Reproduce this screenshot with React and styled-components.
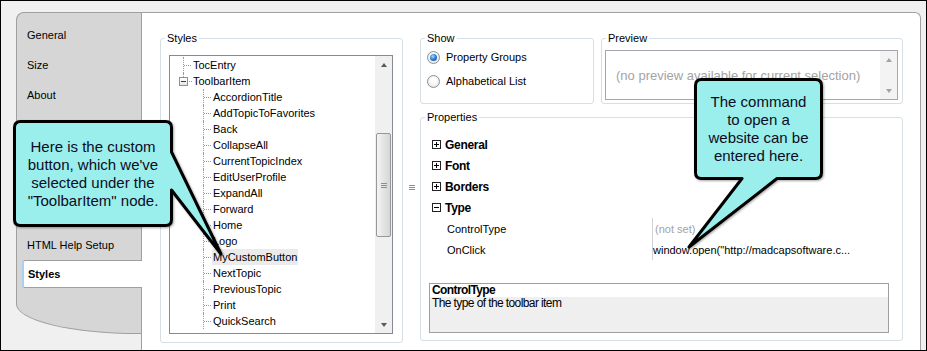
import styled, { createGlobalStyle } from "styled-components";

const GlobalStyle = createGlobalStyle`
  html, body {
    margin: 0;
    padding: 0;
  }
  body {
    background: #f0f0f0;
    font-family: "Liberation Sans", Arial, sans-serif;
    font-size: 11px;
    color: #000;
  }
`;

const treeItems = [
  { label: "TocEntry", level: 1 },
  { label: "ToolbarItem", level: 1, expander: true },
  { label: "AccordionTitle", level: 2 },
  { label: "AddTopicToFavorites", level: 2 },
  { label: "Back", level: 2 },
  { label: "CollapseAll", level: 2 },
  { label: "CurrentTopicIndex", level: 2 },
  { label: "EditUserProfile", level: 2 },
  { label: "ExpandAll", level: 2 },
  { label: "Forward", level: 2 },
  { label: "Home", level: 2 },
  { label: "Logo", level: 2 },
  { label: "MyCustomButton", level: 2, selected: true },
  { label: "NextTopic", level: 2 },
  { label: "PreviousTopic", level: 2 },
  { label: "Print", level: 2 },
  { label: "QuickSearch", level: 2 },
];

const propertyGroups = ["General", "Font", "Borders"];

export default function App() {
  return (
    <>
      <GlobalStyle />
      <Window>
        <TabColumn>
          <Tab>General</Tab>
          <Tab>Size</Tab>
          <Tab>About</Tab>
          <TabGap />
          <Tab>HTML Help Setup</Tab>
          <Tab $active>Styles</Tab>
        </TabColumn>

        <Panel>
          <StylesGroup>
            <Legend>Styles</Legend>
            <TreeBox>
              <TreeList>
                {treeItems.map((item) => (
                  <TreeRow key={item.label}>
                    {item.expander ? (
                      <ExpanderCell>
                        <ExpandBox />
                        <Dash />
                      </ExpanderCell>
                    ) : (
                      <Connector $level={item.level} />
                    )}
                    <TreeLabel $selected={item.selected}>{item.label}</TreeLabel>
                  </TreeRow>
                ))}
              </TreeList>
              <ScrollBar>
                <ScrollButton>
                  <Arrow />
                </ScrollButton>
                <Thumb $offset={60} $size={104}>
                  <Grip />
                </Thumb>
                <ScrollFill />
                <ScrollButton>
                  <Arrow $down />
                </ScrollButton>
              </ScrollBar>
            </TreeBox>
          </StylesGroup>

          <Splitter>
            <Grip />
          </Splitter>

          <RightColumn>
            <TopRow>
              <ShowGroup>
                <Legend>Show</Legend>
                <RadioRow>
                  <Radio $checked />
                  Property Groups
                </RadioRow>
                <RadioRow>
                  <Radio />
                  Alphabetical List
                </RadioRow>
              </ShowGroup>
              <PreviewGroup>
                <Legend>Preview</Legend>
                <PreviewBox>
                  <PreviewText>(no preview available for current selection)</PreviewText>
                  <ScrollBar $light>
                    <ScrollButton>
                      <Arrow $disabled />
                    </ScrollButton>
                    <ScrollFill />
                    <ScrollButton>
                      <Arrow $down $disabled />
                    </ScrollButton>
                  </ScrollBar>
                </PreviewBox>
              </PreviewGroup>
            </TopRow>

            <PropertiesGroup>
              <Legend>Properties</Legend>
              <PropRows>
                {propertyGroups.map((name) => (
                  <GroupRow key={name}>
                    <PlusBox />
                    {name}
                  </GroupRow>
                ))}
                <GroupRow>
                  <PlusBox $open />
                  Type
                </GroupRow>
                <PropRow>
                  <PropName>ControlType</PropName>
                  <PropValue $muted>(not set)</PropValue>
                </PropRow>
                <PropRow>
                  <PropName>OnClick</PropName>
                  <PropValue>window.open("http://madcapsoftware.c...</PropValue>
                </PropRow>
              </PropRows>
              <DescBox>
                <DescTitle>ControlType</DescTitle>
                <DescBody>The type of the toolbar item</DescBody>
              </DescBox>
            </PropertiesGroup>
          </RightColumn>
        </Panel>

        <Callout $x={13} $y={120} $w={160} $h={107}>
          <CalloutShape width="160" height="107">
            <path d="M7.5 1.5 H152.5 Q158.5 1.5 158.5 7.5 V32 L208 134 L158.5 70 V99.5 Q158.5 105.5 152.5 105.5 H7.5 Q1.5 105.5 1.5 99.5 V7.5 Q1.5 1.5 7.5 1.5 Z" />
          </CalloutShape>
          <CalloutText>
            Here is the custom
            <br />
            button, which we've
            <br />
            selected under the
            <br />
            "ToolbarItem" node.
          </CalloutText>
        </Callout>

        <Callout $x={694} $y={78} $w={129} $h={102}>
          <CalloutShape width="129" height="102">
            <path d="M7.5 1.5 H121.5 Q127.5 1.5 127.5 7.5 V94.5 Q127.5 100.5 121.5 100.5 H83 L-5 169 L48 100.5 H7.5 Q1.5 100.5 1.5 94.5 V7.5 Q1.5 1.5 7.5 1.5 Z" />
          </CalloutShape>
          <CalloutText>
            The command
            <br />
            to open a
            <br />
            website can be
            <br />
            entered here.
          </CalloutText>
        </Callout>
      </Window>
    </>
  );
}

const Window = styled.div`
  position: relative;
  width: 927px;
  height: 351px;
  box-sizing: border-box;
  border: 1px solid #000;
  background: #f0f0f0;
  overflow: hidden;
  display: flex;
  align-items: flex-start;
  padding: 11px 5px 0 15px;
`;

const TabColumn = styled.div`
  width: 125px;
  height: 322px;
  flex: none;
  box-sizing: border-box;
  display: flex;
  flex-direction: column;
  padding-top: 7px;
  background: #d6d6d6;
  border-top: 1px solid #a0a0a0;
  border-left: 1px solid #a0a0a0;
  border-bottom: 1px solid #a0a0a0;
  border-top-left-radius: 8px;
  border-bottom-left-radius: 122px 30px;
`;

const Tab = styled.div`
  position: relative;
  z-index: 1;
  display: flex;
  align-items: center;
  box-sizing: border-box;
  height: ${(p) => (p.$active ? 28 : 30)}px;
  padding-left: ${(p) => (p.$active ? 4 : 10)}px;
  margin-left: ${(p) => (p.$active ? 5 : 0)}px;
  margin-right: ${(p) => (p.$active ? -1 : 0)}px;
  font-weight: ${(p) => (p.$active ? 700 : 400)};
  ${(p) =>
    p.$active &&
    `
    background: #fff;
    border-top: 1px solid #a0a0a0;
    border-bottom: 1px solid #a0a0a0;
    border-left: 2px solid #a9d1f3;
    border-radius: 3px 0 0 3px;
  `}
`;

const TabGap = styled.div`
  height: 120px;
`;

const Panel = styled.div`
  flex: 1;
  align-self: stretch;
  display: flex;
  align-items: flex-start;
  box-sizing: border-box;
  padding: 19px 17px 0 18px;
  background: #fff;
  border: 1px solid #a0a0a0;
  border-bottom: none;
  border-top-right-radius: 6px;
`;

const Group = styled.fieldset`
  margin: 0;
  min-width: 0;
  box-sizing: border-box;
  padding: 0 6px;
  border: 1px solid #d5dfe5;
  border-radius: 3px;
`;

const Legend = styled.legend`
  padding: 0 2px;
  margin-left: -2px;
  font-size: 11px;
  line-height: 13px;
`;

const StylesGroup = styled(Group)`
  width: 243px;
  height: 311px;
  flex: none;
  display: flex;
  padding-top: 10px;
  padding-bottom: 8px;
`;

const TreeBox = styled.div`
  flex: 1;
  display: flex;
  margin: 0 3px 0 2px;
  border: 1px solid #868a91;
  background: #fff;
  overflow: hidden;
`;

const TreeList = styled.div`
  flex: 1;
  padding-top: 1px;
  overflow: hidden;
`;

const TreeRow = styled.div`
  display: flex;
  align-items: center;
  height: 16px;
  white-space: nowrap;
`;

const Connector = styled.span`
  align-self: stretch;
  flex: none;
  width: 8px;
  margin-left: ${(p) => (p.$level === 1 ? 13 : 33)}px;
  border-left: 1px dotted #9a9a9a;
  background: repeating-linear-gradient(to right, #9a9a9a 0 1px, transparent 1px 2px) left center / 100% 1px no-repeat;
`;

const ExpanderCell = styled.span`
  display: flex;
  align-items: center;
  flex: none;
  margin-left: 9px;
`;

const ExpandBox = styled.span`
  position: relative;
  width: 9px;
  height: 9px;
  box-sizing: border-box;
  border: 1px solid #919191;
  background: linear-gradient(#3c3c3c, #3c3c3c) center / 5px 1px no-repeat,
    linear-gradient(#fff, #e6e6e6);

  &::before {
    content: "";
    position: absolute;
    left: 3px;
    top: -5px;
    height: 4px;
    border-left: 1px dotted #9a9a9a;
  }
`;

const Dash = styled.span`
  width: 4px;
  height: 1px;
  background: repeating-linear-gradient(to right, transparent 0 1px, #9a9a9a 1px 2px);
`;

const TreeLabel = styled.span`
  padding: 1px 1px;
  line-height: 14px;
  background: ${(p) => (p.$selected ? "#ebebeb" : "transparent")};
`;

const ScrollBar = styled.div`
  width: 17px;
  flex: none;
  display: flex;
  flex-direction: column;
  background: ${(p) => (p.$light ? "#f3f3f3" : "#f0f0f0")};
`;

const ScrollButton = styled.div`
  height: 17px;
  flex: none;
  display: flex;
  align-items: center;
  justify-content: center;
`;

const ScrollFill = styled.div`
  flex: 1;
`;

const Arrow = styled.span`
  width: 0;
  height: 0;
  border-left: 3.5px solid transparent;
  border-right: 3.5px solid transparent;
  ${(p) => (p.$down ? "border-top" : "border-bottom")}: 4px solid
    ${(p) => (p.$disabled ? "#a3a3a3" : "#5a5a5a")};
`;

const Thumb = styled.div`
  display: flex;
  align-items: center;
  justify-content: center;
  flex: none;
  box-sizing: border-box;
  margin: ${(p) => p.$offset}px 1px 0 1px;
  height: ${(p) => p.$size}px;
  border: 1px solid #979797;
  border-radius: 2px;
  background: linear-gradient(to right, #f4f4f4, #e4e4e4 50%, #d6d6d6);
`;

const Grip = styled.span`
  width: 6px;
  height: 5px;
  background: repeating-linear-gradient(#8e8e8e 0 1px, transparent 1px 2px);
`;

const Splitter = styled.div`
  width: 17px;
  height: 311px;
  flex: none;
  display: flex;
  align-items: center;
  justify-content: center;
  padding-left: 1px;
  box-sizing: border-box;
`;

const RightColumn = styled.div`
  width: 483px;
  flex: none;
  display: flex;
  flex-direction: column;
`;

const TopRow = styled.div`
  display: flex;
  gap: 7px;
`;

const ShowGroup = styled(Group)`
  width: 174px;
  height: 72px;
`;

const RadioRow = styled.div`
  display: flex;
  align-items: center;
  gap: 6px;
  height: 24px;
`;

const Radio = styled.span`
  width: 13px;
  height: 13px;
  flex: none;
  box-sizing: border-box;
  display: flex;
  align-items: center;
  justify-content: center;
  border-radius: 50%;
  border: 1px solid #8e8f8f;
  background: radial-gradient(circle at 50% 40%, #ffffff 0 25%, #dcdcdc 100%);

  &::after {
    content: "";
    display: ${(p) => (p.$checked ? "block" : "none")};
    width: 7px;
    height: 7px;
    border-radius: 50%;
    background: radial-gradient(circle at 40% 35%, #a6dcff 0, #2a7bd0 50%, #0f3f86 100%);
  }
`;

const PreviewGroup = styled(Group)`
  width: 302px;
  height: 72px;
  padding-top: 5px;
`;

const PreviewBox = styled.div`
  display: flex;
  height: 50px;
  box-sizing: border-box;
  margin: 0 -2px 0 -3px;
  border: 1px solid #a5a7ad;
  background: #fff;
`;

const PreviewText = styled.div`
  flex: 1;
  display: flex;
  align-items: center;
  padding-left: 10px;
  font-size: 13px;
  color: #a3a3a3;
  white-space: nowrap;
`;

const PropertiesGroup = styled(Group)`
  height: 230px;
  margin-top: 7px;
  padding-top: 10px;
`;

const PropRows = styled.div`
  margin-left: 5px;
  display: flex;
  flex-direction: column;
`;

const GroupRow = styled.div`
  display: flex;
  align-items: center;
  gap: 4px;
  height: 21px;
  font-size: 12px;
  font-weight: 700;
  letter-spacing: -0.3px;
`;

const PlusBox = styled.span`
  width: 9px;
  height: 9px;
  box-sizing: border-box;
  flex: none;
  border: 1px solid #222;
  background: linear-gradient(#000, #000) center / 5px 1px no-repeat,
    ${(p) => (p.$open ? "" : "linear-gradient(#000, #000) center / 1px 5px no-repeat,")} #fff;
`;

const PropRow = styled.div`
  display: flex;
  align-items: stretch;
  height: 21px;
`;

const PropName = styled.div`
  width: 220px;
  box-sizing: border-box;
  padding-left: 15px;
  display: flex;
  align-items: center;
`;

const PropValue = styled.div`
  flex: 1;
  display: flex;
  align-items: center;
  padding-left: ${(p) => (p.$muted ? 2 : 0)}px;
  border-left: 1px solid #d2d2d2;
  color: ${(p) => (p.$muted ? "#a3a3a3" : "#000")};
  white-space: nowrap;
`;

const DescBox = styled.div`
  margin: 23px 7px 0 2px;
  height: 50px;
  box-sizing: border-box;
  display: flex;
  flex-direction: column;
  border: 1px solid #a0a0a0;
  font-size: 12px;
  letter-spacing: -0.6px;
  line-height: 13px;
`;

const DescTitle = styled.div`
  padding-left: 2px;
  background: #fff;
  font-weight: 700;
`;

const DescBody = styled.div`
  flex: 1;
  padding-left: 2px;
  background: #efefef;
`;

const Callout = styled.div`
  position: absolute;
  z-index: 5;
  left: ${(p) => p.$x - 1}px;
  top: ${(p) => p.$y - 1}px;
  width: ${(p) => p.$w}px;
  height: ${(p) => p.$h}px;
`;

const CalloutShape = styled.svg`
  position: absolute;
  left: 0;
  top: 0;
  overflow: visible;
  filter: drop-shadow(1px 1px 1px rgba(0, 0, 0, 0.35));

  path {
    fill: #9aefec;
    stroke: #000;
    stroke-width: 3;
    stroke-linejoin: round;
  }
`;

const CalloutText = styled.div`
  position: relative;
  height: 100%;
  display: flex;
  align-items: center;
  justify-content: center;
  text-align: center;
  font-family: "Liberation Sans", Arial, sans-serif;
  font-size: 15px;
  line-height: 18px;
  color: #0c0c24;
`;
